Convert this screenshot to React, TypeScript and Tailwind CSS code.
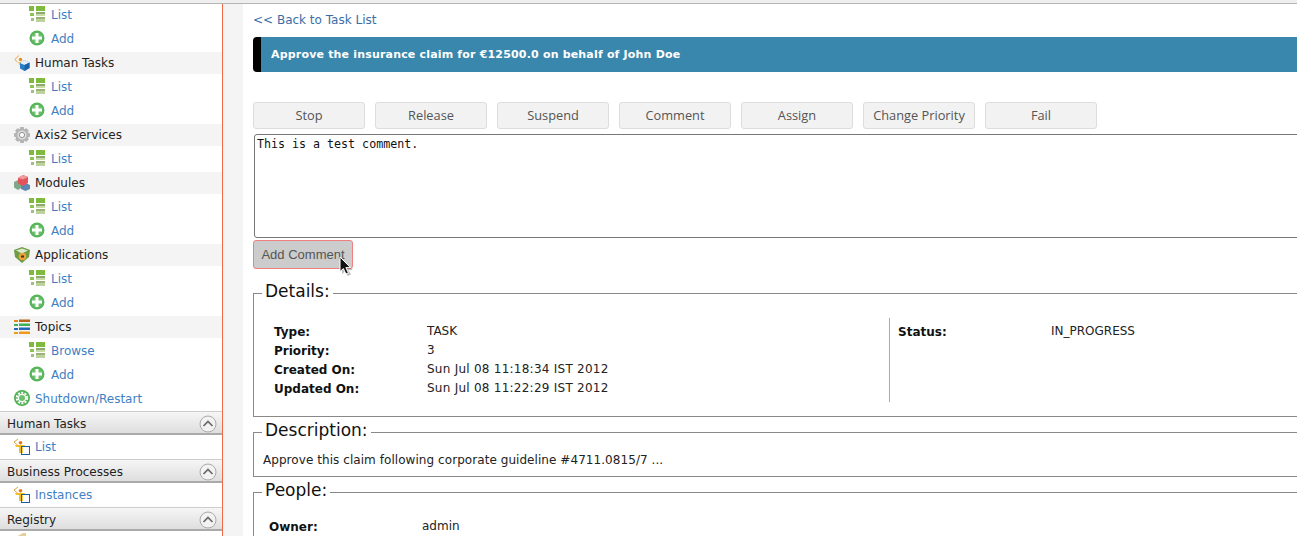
const GridIcon = () => (
  <svg width="16" height="16" viewBox="0 0 16 16" className="-mt-[2px] shrink-0">
    <rect x="0" y="0" width="5" height="5" fill="#7dbb3c" />
    <rect x="7" y="0" width="9" height="5" fill="#7dbb3c" />
    <rect x="1" y="7" width="4" height="3" fill="#8fc256" />
    <rect x="7" y="6" width="9" height="2" fill="#8fa86c" />
    <rect x="7" y="8" width="9" height="2" fill="#c5dba8" />
    <rect x="2" y="12" width="3" height="3" fill="#a3bd80" />
    <rect x="7" y="11" width="9" height="2" fill="#9db37c" />
    <rect x="7" y="13" width="9" height="3" fill="#bcd3a0" />
  </svg>
);

const AddIcon = () => (
  <svg width="16" height="16" viewBox="0 0 16 16" className="-mt-[2px] shrink-0">
    <circle cx="8" cy="8" r="7.5" fill="#56b45a" />
    <circle cx="8" cy="8" r="5.5" fill="#6cc06c" />
    <rect x="6.5" y="3" width="3" height="10" fill="#fff" />
    <rect x="3" y="6.5" width="10" height="3" fill="#fff" />
  </svg>
);

const TaskCubeIcon = () => (
  <svg width="16" height="16" viewBox="0 0 16 16" className="shrink-0">
    <path d="M5 0.5 L0.8 4.5 L3.5 7" fill="none" stroke="#e8a33c" strokeWidth="1" />
    <circle cx="6.5" cy="4.5" r="1.7" fill="#e88a1c" />
    <path d="M4 7 H9 V11 H6 Z" fill="#f0c030" />
    <path d="M10.5 5 L15.5 7.5 V13 L10.5 16 L6 13.5 V8 Z" fill="#2a7fc4" />
    <path d="M10.5 5 L15.5 7.5 L10.5 10 L6 8 Z" fill="#e8f2fa" />
    <path d="M10.5 10 L15.5 7.5 V13 L10.5 16 Z" fill="#1c64a8" />
  </svg>
);

const GearIcon = () => (
  <svg width="16" height="16" viewBox="0 0 16 16" className="shrink-0">
    <path
      d="M6.2 0 H9.8 L10.2 2.2 L12.4 1.2 L14.8 3.6 L13.8 5.8 L16 6.2 V9.8 L13.8 10.2 L14.8 12.4 L12.4 14.8 L10.2 13.8 L9.8 16 H6.2 L5.8 13.8 L3.6 14.8 L1.2 12.4 L2.2 10.2 L0 9.8 V6.2 L2.2 5.8 L1.2 3.6 L3.6 1.2 L5.8 2.2 Z"
      fill="#b4b4b4"
    />
    <circle cx="8" cy="8" r="4.6" fill="#dcdcdc" />
    <circle cx="8" cy="8" r="2.6" fill="#fafafa" stroke="#808080" strokeWidth="0.8" />
  </svg>
);

const ModulesIcon = () => (
  <svg width="16" height="16" viewBox="0 0 16 16" className="shrink-0">
    <path d="M0 7 L4 5 L7 7 V13 L4 15 L0 12.5 Z" fill="#7ea88a" />
    <path d="M7 10 L11.5 8 L16 10 V14 L11.5 16 L7 14 Z" fill="#5d87b5" />
    <path d="M4 3 L9 0 L14 2 V8 L9 11 L4 8.5 Z" fill="#e0545a" />
    <path d="M4 3 L9 0 L14 2 L9 4.5 Z" fill="#f09a9c" />
  </svg>
);

const AppIcon = () => (
  <svg width="16" height="16" viewBox="0 0 16 16" className="shrink-0">
    <path d="M0 3 L8 0 L16 3 L15 10 L8 16 L1 10 Z" fill="#6d9c45" />
    <path d="M2 3.5 L8 1.5 L14 3.5 L8 6.5 Z" fill="#dbe9c6" />
    <circle cx="8.5" cy="9.5" r="3.8" fill="#e8a33c" />
    <rect x="7" y="8.5" width="3" height="2" fill="#4b3416" />
  </svg>
);

const TopicsIcon = () => (
  <svg width="16" height="16" viewBox="0 0 16 16" className="shrink-0">
    <rect x="0" y="1" width="4" height="2" fill="#e08a1c" />
    <rect x="5" y="0.5" width="11" height="2.5" fill="#b8651a" />
    <rect x="0" y="5" width="4" height="2" fill="#3cb15c" />
    <rect x="5" y="4.5" width="11" height="2.5" fill="#3cb15c" />
    <rect x="0" y="9" width="4" height="2" fill="#2467b5" />
    <rect x="5" y="8.5" width="11" height="2.5" fill="#2467b5" />
    <rect x="0" y="13" width="4" height="2" fill="#f09a1c" />
    <rect x="5" y="12.5" width="11" height="2.5" fill="#f09a1c" />
  </svg>
);

const ShutdownIcon = () => (
  <svg width="16" height="16" viewBox="0 0 16 16" className="-mt-[2px] shrink-0">
    <circle cx="8" cy="8" r="8" fill="#52b256" />
    <circle cx="8" cy="8" r="5.2" fill="none" stroke="#ffffff" strokeWidth="2" strokeDasharray="2 1.3" />
    <circle cx="8" cy="8" r="4.2" fill="#ffffff" />
    <circle cx="8" cy="8" r="3" fill="#6cc06c" />
  </svg>
);

const PersonTaskIcon = () => (
  <svg width="16" height="16" viewBox="0 0 16 16" className="shrink-0">
    <path d="M4 0 L0 3 L3.5 6" fill="none" stroke="#e8a33c" strokeWidth="1" />
    <circle cx="6.5" cy="3.8" r="1.8" fill="#e0791c" />
    <path d="M1 6 L11 6 L10 8 L9 8 V14 H5 V8 L2 8 Z" fill="#f0c020" />
    <rect x="7.5" y="7.5" width="8" height="8" fill="#fff" fillOpacity="0.25" stroke="#1d5f9e" strokeWidth="1" />
  </svg>
);

const CollapseIcon = () => (
  <svg width="18" height="18" viewBox="0 0 18 18" className="mt-[2px] shrink-0">
    <circle cx="9" cy="9" r="8" fill="#f2f2f2" stroke="#aaa" strokeWidth="1" />
    <path d="M4.5 11 L9 6.5 L13.5 11" fill="none" stroke="#666" strokeWidth="1.6" />
  </svg>
);

const Child = ({ label, add }: { label: string; add?: boolean }) => (
  <div className="flex h-6 items-center gap-[6px] pl-[29px] text-[#3f7fc4]">
    {add ? <AddIcon /> : <GridIcon />}
    <span>{label}</span>
  </div>
);

const Parent = ({ label, icon }: { label: string; icon: React.ReactNode }) => (
  <div className="my-px flex h-[22px] items-center gap-[5px] bg-[#f4f4f4] pl-[14px] text-[#222]">
    {icon}
    <span>{label}</span>
  </div>
);

const SectionHead = ({ label }: { label: string }) => (
  <div className="flex h-6 items-center justify-between border-t border-b-2 border-t-[#ccc] border-b-[#aaa] bg-gradient-to-b from-[#f6f6f6] to-[#dedede] pr-[5px] pl-[7px] text-[#222]">
    <span className="mt-[2px]">{label}</span>
    <CollapseIcon />
  </div>
);

const SectionLink = ({ label }: { label: string }) => (
  <div className="flex h-6 items-center gap-[5px] pl-[14px] text-[#3f7fc4]">
    <PersonTaskIcon />
    <span>{label}</span>
  </div>
);

const Sidebar = () => (
  <div className="w-[223px] shrink-0 border-r border-[#f26a45] bg-white">
    <div className="-mt-px">
      <Child label="List" />
      <Child label="Add" add />
      <Parent label="Human Tasks" icon={<TaskCubeIcon />} />
      <Child label="List" />
      <Child label="Add" add />
      <Parent label="Axis2 Services" icon={<GearIcon />} />
      <Child label="List" />
      <Parent label="Modules" icon={<ModulesIcon />} />
      <Child label="List" />
      <Child label="Add" add />
      <Parent label="Applications" icon={<AppIcon />} />
      <Child label="List" />
      <Child label="Add" add />
      <Parent label="Topics" icon={<TopicsIcon />} />
      <Child label="Browse" />
      <Child label="Add" add />
      <div className="flex h-6 items-center gap-[5px] pl-[14px] text-[#3f7fc4]">
        <ShutdownIcon />
        <span>Shutdown/Restart</span>
      </div>
    </div>
    <SectionHead label="Human Tasks" />
    <SectionLink label="List" />
    <SectionHead label="Business Processes" />
    <SectionLink label="Instances" />
    <SectionHead label="Registry" />
    <div className="pt-[2px] pl-[16px]">
      <svg width="11" height="8" viewBox="0 0 11 8">
        <path d="M0 4 L7 0 H10 V8 H0 Z" fill="#e4cf9a" />
      </svg>
    </div>
  </div>
);

const actions = ["Stop", "Release", "Suspend", "Comment", "Assign", "Change Priority", "Fail"];

const Box = ({ title, className, children }: { title: string; className: string; children: React.ReactNode }) => (
  <fieldset className={`w-[1100px] border border-[#888] ${className}`}>
    <legend className="ml-[8px] px-[3px] pb-[3px] text-[17px] leading-[21px] text-[#111]">{title}</legend>
    {children}
  </fieldset>
);

const Pair = ({ k, v, date }: { k: string; v: string; date?: boolean }) => (
  <div className="flex h-[19px] items-center">
    <span className="mt-[2px] w-[153px] font-bold text-[#111]">{k}</span>
    <span className={date ? "tracking-[0.25px] text-[#222]" : "text-[#222]"}>{v}</span>
  </div>
);

export default function App() {
  return (
    <div className="h-[536px] w-[1297px] overflow-hidden bg-white font-['DejaVu_Sans',sans-serif] text-[12px]">
      <div className="relative z-10 h-1 border-b border-[#b5b5b5] bg-[#eeeeee]" />
      <div className="flex">
        <Sidebar />
        <div className="w-5 shrink-0 bg-[#f4f4f4]" />
        <div className="w-[1100px] shrink-0 pt-[7px] pl-[10px]">
          <a className="block h-[15px] text-[#3a6ea5]">&lt;&lt; Back to Task List</a>

          <div className="mt-[11px] flex h-[35px] w-[1100px] items-center rounded-l border-l-8 border-black bg-[#3a87ad] pt-[2px] pl-[10px] text-[11px] font-bold tracking-[0.18px] text-white">
            Approve the insurance claim for €12500.0 on behalf of John Doe
          </div>

          <div className="mt-[30px] flex gap-[10px]">
            {actions.map((a) => (
              <button
                key={a}
                className="h-[27px] w-[112px] rounded-[3px] border border-[#dddddd] bg-[#f2f2f2] font-['Open_Sans',sans-serif] text-[12.8px] text-[#555]"
              >
                {a}
              </button>
            ))}
          </div>

          <textarea
            readOnly
            value="This is a test comment."
            className="mt-[5px] ml-px block h-[104px] w-[1100px] resize-none rounded-[3px] border border-[#777] px-[2px] pt-[2px] font-['DejaVu_Sans_Mono',monospace] text-[11.65px] leading-[15px] text-[#111]"
          />

          <div className="relative mt-[2px] w-[100px]">
            <button className="h-[29px] w-[100px] rounded-[3px] border border-[#ee8080] bg-[#cccccc] font-['Liberation_Sans',sans-serif] text-[13px] text-[#555]">
              Add Comment
            </button>
            <svg width="14" height="20" viewBox="0 0 14 20" className="absolute top-[16px] left-[86px]">
              <path d="M3 4 V18 L6 15.5 L8.5 20 L12 18.5 L9.5 14 H14 Z" fill="#000" fillOpacity="0.25" />
              <path d="M1 1 V15.5 L4.4 12.6 L6.9 18 L9.4 16.9 L6.9 11.6 H11.5 Z" fill="#111" stroke="#fff" strokeWidth="1" />
            </svg>
          </div>

          <Box title="Details:" className="mt-[12px] h-[136px]">
            <div className="mt-[13px] flex">
              <div className="h-[84px] w-[636px] shrink-0 border-r border-[#aaa] pt-[3px] pl-[20px]">
                <Pair k="Type:" v="TASK" />
                <Pair k="Priority:" v="3" />
                <Pair k="Created On:" v="Sun Jul 08 11:18:34 IST 2012" date />
                <Pair k="Updated On:" v="Sun Jul 08 11:22:29 IST 2012" date />
              </div>
              <div className="pt-[3px] pl-[8px]">
                <Pair k="Status:" v="IN_PROGRESS" />
              </div>
            </div>
          </Box>

          <Box title="Description:" className="mt-[3px] h-[57px]">
            <p className="mt-[7px] pl-[9px] tracking-[0.06px] text-[#222]">Approve this claim following corporate guideline #4711.0815/7 ...</p>
          </Box>

          <Box title="People:" className="mt-[3px] h-[80px]">
            <div className="mt-[12px] pl-[15px]">
              <Pair k="Owner:" v="admin" />
            </div>
          </Box>
        </div>
      </div>
    </div>
  );
}
